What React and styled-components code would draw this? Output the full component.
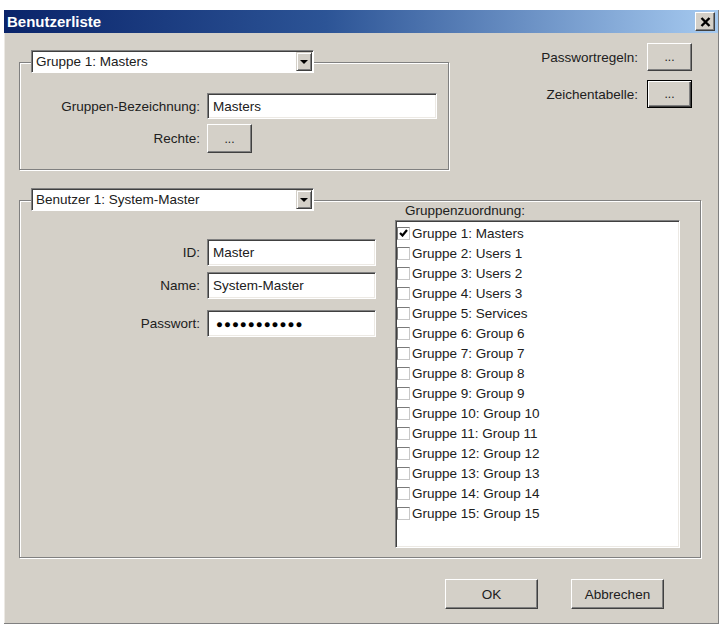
import React from 'react';
import styled, { createGlobalStyle } from 'styled-components';

const GlobalStyle = createGlobalStyle`
  html, body {
    margin: 0;
    background: #fff;
  }
  body {
    font-family: "Liberation Sans", Arial, sans-serif;
    font-size: 13.5px;
    color: #202020;
  }
`;

const Window = styled.div`
  box-sizing: border-box;
  width: 715px;
  height: 614px;
  margin: 10px 0 0 4px;
  background: #d4d0c8;
  border-right: 1px solid #808080;
  border-bottom: 1px solid #808080;
  box-shadow: inset 1px 0 0 #ece9e4;
  display: flex;
  flex-direction: column;
`;

const TitleBar = styled.div`
  height: 23px;
  padding: 0 3px 0 3px;
  display: flex;
  align-items: center;
  justify-content: space-between;
  background: linear-gradient(to right, #0a246a 0%, #2c5496 45%, #a6caf0 100%);
  color: #fff;
  font-weight: bold;
  font-size: 15px;
`;

const CloseButton = styled.div`
  box-sizing: border-box;
  width: 20px;
  height: 19px;
  display: flex;
  align-items: center;
  justify-content: center;
  background: #d4d0c8;
  border: 1px solid;
  border-color: #fff #404040 #404040 #fff;
  box-shadow: inset -1px -1px 0 #808080;
`;

const Body = styled.div`
  flex: 1;
  display: flex;
  flex-direction: column;
  padding: 0 17px 0 15px;
`;

const TopRow = styled.div`
  display: flex;
  justify-content: space-between;
  align-items: flex-start;
`;

const GroupBox = styled.div`
  box-sizing: border-box;
  width: ${p => (p.$width ? `${p.$width}px` : 'auto')};
  margin-top: ${p => p.$top}px;
  border: 1px solid #808080;
  box-shadow: 1px 1px 0 #fff, inset 1px 1px 0 #fff;
  padding: 0 ${p => p.$padRight || 0}px ${p => p.$padBottom || 0}px 0;
`;

const Combo = styled.div`
  box-sizing: border-box;
  width: 283px;
  height: 23px;
  margin: -13px 0 0 11px;
  display: flex;
  align-items: center;
  background: #fff;
  border: 1px solid;
  border-color: #808080 #fff #fff #808080;
  box-shadow: inset 1px 1px 0 #404040;
  padding-left: 4px;
`;

const ComboText = styled.span`
  flex: 1;
  white-space: nowrap;
`;

const DropButton = styled.div`
  box-sizing: border-box;
  width: 16px;
  height: 19px;
  margin-right: 1px;
  display: flex;
  align-items: center;
  justify-content: center;
  background: #d4d0c8;
  border: 1px solid;
  border-color: #d4d0c8 #404040 #404040 #d4d0c8;
  box-shadow: inset 1px 1px 0 #fff, inset -1px -1px 0 #808080;
`;

const Arrow = styled.span`
  width: 0;
  height: 0;
  border-left: 4px solid transparent;
  border-right: 4px solid transparent;
  border-top: 4px solid #000;
`;

const FormRow = styled.div`
  display: flex;
  align-items: center;
  gap: 7px;
  margin-top: ${p => p.$top}px;
`;

const Label = styled.span`
  width: 180px;
  text-align: right;
  white-space: nowrap;
`;

const Field = styled.div`
  box-sizing: border-box;
  width: ${p => p.$width}px;
  height: ${p => p.$height}px;
  display: flex;
  align-items: center;
  padding-left: 5px;
  background: #fff;
  border: 1px solid;
  border-color: #808080 #fff #fff #808080;
  box-shadow: inset 1px 1px 0 #404040, inset -1px -1px 0 #ece9e4;
  white-space: nowrap;
`;

const Dots = styled.span`
  font-size: 11.5px;
  letter-spacing: 1px;
  color: #000;
  padding-left: 3px;
`;

const Button = styled.div`
  box-sizing: border-box;
  width: ${p => p.$width}px;
  height: ${p => p.$height}px;
  display: flex;
  align-items: center;
  justify-content: center;
  background: #d4d0c8;
  border: 1px solid;
  border-color: ${p => (p.$focused ? '#000' : '#fff #404040 #404040 #fff')};
  box-shadow: ${p =>
    p.$focused
      ? 'inset 1px 1px 0 #fff, inset -1px -1px 0 #404040, inset -2px -2px 0 #808080'
      : 'inset -1px -1px 0 #808080'};
  font-size: ${p => (p.$small ? '12px' : '13.5px')};
  color: #202020;
`;

const Tools = styled.div`
  margin: 10px 9px 0 0;
  display: grid;
  grid-template-columns: auto 45px;
  column-gap: 9px;
  row-gap: 9px;
  align-items: center;
  justify-items: end;
`;

const Split = styled.div`
  display: flex;
  align-items: flex-start;
`;

const LeftCol = styled.div`
  width: 356px;
`;

const RightCol = styled.div`
  margin: 2px 0 0 19px;
  width: 285px;
`;

const ListCaption = styled.div`
  height: 17px;
  padding-left: 10px;
  line-height: 15px;
`;

const ListBox = styled.div`
  box-sizing: border-box;
  height: 328px;
  padding-top: 2px;
  background: #fff;
  border: 1px solid;
  border-color: #808080 #fff #fff #808080;
  box-shadow: inset 1px 1px 0 #404040, inset -1px -1px 0 #ece9e4;
  padding-left: 1px;
`;

const ListItem = styled.div`
  height: 20px;
  display: flex;
  align-items: center;
  gap: 2px;
  white-space: nowrap;
`;

const Check = styled.span`
  box-sizing: border-box;
  width: 13px;
  height: 13px;
  display: flex;
  align-items: center;
  justify-content: center;
  background: #fff;
  border: 1px solid;
  border-color: #7a7a7a #c8c8c8 #c8c8c8 #7a7a7a;
`;

const Footer = styled.div`
  display: flex;
  justify-content: flex-end;
  gap: 33px;
  padding: 21px 37px 0 0;
`;

const groups = [
  'Masters', 'Users 1', 'Users 2', 'Users 3', 'Services', 'Group 6', 'Group 7',
  'Group 8', 'Group 9', 'Group 10', 'Group 11', 'Group 12', 'Group 13',
  'Group 14', 'Group 15',
];

function ComboBox({ children }) {
  return (
    <Combo>
      <ComboText>{children}</ComboText>
      <DropButton>
        <Arrow />
      </DropButton>
    </Combo>
  );
}

function CheckItem({ checked, children }) {
  return (
    <ListItem>
      <Check>
        {checked && (
          <svg width="9" height="8" viewBox="0 0 9 8">
            <path d="M1 4 L3.5 6.5 L8 1" fill="none" stroke="#000" strokeWidth="2.2" />
          </svg>
        )}
      </Check>
      {children}
    </ListItem>
  );
}

export default function App() {
  return (
    <>
      <GlobalStyle />
      <Window>
        <TitleBar>
          <span>Benutzerliste</span>
          <CloseButton>
            <svg width="11" height="10" viewBox="0 0 11 10">
              <path d="M1.5 1 L9.5 9 M9.5 1 L1.5 9" stroke="#000" strokeWidth="2.4" />
            </svg>
          </CloseButton>
        </TitleBar>

        <Body>
          <TopRow>
            <GroupBox $width={430} $top={29} $padBottom={16}>
              <ComboBox>Gruppe 1: Masters</ComboBox>
              <FormRow $top={20}>
                <Label>Gruppen-Bezeichnung:</Label>
                <Field $width={230} $height={26}>Masters</Field>
              </FormRow>
              <FormRow $top={5}>
                <Label>Rechte:</Label>
                <Button $width={45} $height={29} $small>...</Button>
              </FormRow>
            </GroupBox>

            <Tools>
              <span>Passwortregeln:</span>
              <Button $width={45} $height={28} $small>...</Button>
              <span>Zeichentabelle:</span>
              <Button $width={45} $height={28} $small $focused>...</Button>
            </Tools>
          </TopRow>

          <GroupBox $top={30} $padRight={20} $padBottom={9}>
            <Split>
              <LeftCol>
                <ComboBox>Benutzer 1: System-Master</ComboBox>
                <FormRow $top={28}>
                  <Label>ID:</Label>
                  <Field $width={169} $height={27}>Master</Field>
                </FormRow>
                <FormRow $top={6}>
                  <Label>Name:</Label>
                  <Field $width={169} $height={27}>System-Master</Field>
                </FormRow>
                <FormRow $top={11}>
                  <Label>Passwort:</Label>
                  <Field $width={169} $height={27}>
                    <Dots>●●●●●●●●●●●</Dots>
                  </Field>
                </FormRow>
              </LeftCol>

              <RightCol>
                <ListCaption>Gruppenzuordnung:</ListCaption>
                <ListBox>
                  {groups.map((name, i) => (
                    <CheckItem key={name} checked={i === 0}>
                      Gruppe {i + 1}: {name}
                    </CheckItem>
                  ))}
                </ListBox>
              </RightCol>
            </Split>
          </GroupBox>

          <Footer>
            <Button $width={93} $height={30}>OK</Button>
            <Button $width={93} $height={30}>Abbrechen</Button>
          </Footer>
        </Body>
      </Window>
    </>
  );
}
